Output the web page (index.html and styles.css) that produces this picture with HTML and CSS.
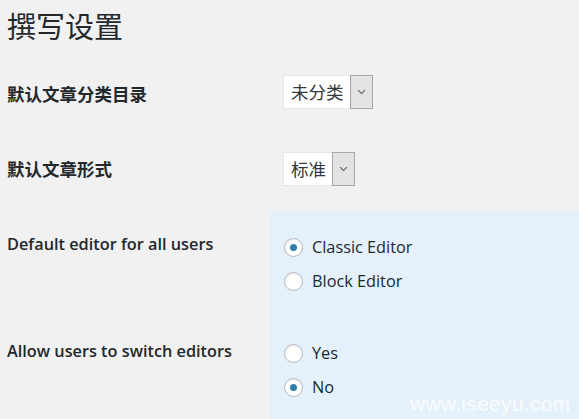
FILE: index.html
```html
<!DOCTYPE html>
<html lang="zh-CN">
<head>
<meta charset="utf-8">
<title>撰写设置</title>
<link rel="stylesheet" href="styles.css">
</head>
<body>
<div class="wrap">
  <h1 class="page-title">撰写设置</h1>
  <div class="form-table">
    <div class="row row-select first">
      <div class="th cjk">默认文章分类目录</div>
      <div class="td">
        <div class="select"><span class="select-value">未分类</span><span class="select-arrow"><svg width="9" height="6" viewBox="0 0 9 6"><path d="M1 1.2 L4.5 4.5 L8 1.2" fill="none" stroke="#666" stroke-width="1.1"/></svg></span></div>
      </div>
    </div>
    <div class="row row-select second">
      <div class="th cjk">默认文章形式</div>
      <div class="td">
        <div class="select"><span class="select-value">标准</span><span class="select-arrow"><svg width="9" height="6" viewBox="0 0 9 6"><path d="M1 1.2 L4.5 4.5 L8 1.2" fill="none" stroke="#666" stroke-width="1.1"/></svg></span></div>
      </div>
    </div>
    <div class="row row-radio r3">
      <div class="th en">Default editor for all users</div>
      <div class="td blue">
        <label class="radio"><span class="dot checked"></span>Classic Editor</label>
        <label class="radio"><span class="dot"></span>Block Editor</label>
      </div>
    </div>
    <div class="row row-radio r4">
      <div class="th en">Allow users to switch editors</div>
      <div class="td blue">
        <label class="radio"><span class="dot"></span>Yes</label>
        <label class="radio"><span class="dot checked"></span>No</label>
      </div>
    </div>
  </div>
  <div class="watermark">www.iseeyu.com</div>
</div>
</body>
</html>
```
FILE: styles.css
```css
html, body {
  margin: 0;
  padding: 0;
  height: 100%;
  overflow: hidden;
}
body {
  background: #f1f1f1;
  color: #23282d;
  font-family: "Open Sans", "Noto Sans CJK SC", sans-serif;
}
.wrap {
  position: relative;
  height: 419px;
}
.page-title {
  margin: 0;
  padding: 7px 0 0 7px;
  font-family: "Noto Sans CJK SC", sans-serif;
  font-weight: 400;
  font-size: 29px;
  line-height: 36px;
  color: #23282d;
}
.form-table {
  display: grid;
  grid-template-columns: 270px 1fr;
}
.row {
  display: contents;
}
.th {
  padding-left: 7px;
  color: #23282d;
}
.cjk {
  font-family: "Noto Sans CJK SC", sans-serif;
  font-weight: 700;
  font-size: 17.5px;
  line-height: 34px;
  height: 34px;
  display: flex;
  align-items: center;
}
.en {
  font-family: "Open Sans", sans-serif;
  font-weight: 600;
  font-size: 16.3px;
  line-height: 36px;
}
.first .th { margin-top: 34px; }
.first .td { padding-top: 32px; }
.second .th { margin-top: 41px; }
.second .td { padding-top: 41px; padding-bottom: 24px; }
.row-select .td { padding-left: 13px; }
.select {
  display: inline-flex;
  height: 34px;
  box-sizing: border-box;
  border: 1px solid #e6e6e6;
  background: #fff;
}
.select-value {
  font-family: "Noto Sans CJK SC", sans-serif;
  font-size: 17.5px;
  line-height: 32px;
  color: #32373c;
  padding: 0 6px 0 7px;
}
.select-arrow {
  width: 21px;
  margin: -1px -1px -1px 0;
  border: 1px solid #a7a7a7;
  background: #e3e3e3;
  display: flex;
  align-items: center;
  justify-content: center;
}
.blue {
  background: #e4f1fb;
  padding-left: 14px;
}
.r3 .th { padding-top: 16px; }
.r3 .td { padding-top: 20px; padding-bottom: 20px; }
.r4 .th { padding-top: 15px; }
.r4 .td { padding-top: 18px; padding-bottom: 20px; }
.radio {
  display: flex;
  align-items: center;
  height: 34px;
  font-family: "Open Sans", sans-serif;
  font-size: 16.3px;
  color: #23282d;
}
.dot {
  width: 19px;
  height: 19px;
  box-sizing: border-box;
  border-radius: 50%;
  border: 1px solid #b4b9be;
  background: #fff;
  box-shadow: inset 0 1px 2px rgba(0,0,0,0.08);
  margin-right: 9px;
  display: flex;
  align-items: center;
  justify-content: center;
}
.dot.checked::after {
  content: "";
  width: 7px;
  height: 7px;
  border-radius: 50%;
  background: #2e7fac;
}
.watermark {
  position: absolute;
  left: 410px;
  top: 392px;
  font-family: "Liberation Sans", Arial, sans-serif;
  font-size: 21px;
  line-height: 24px;
  letter-spacing: 0.3px;
  color: rgba(255,255,255,0.85);
}
```
